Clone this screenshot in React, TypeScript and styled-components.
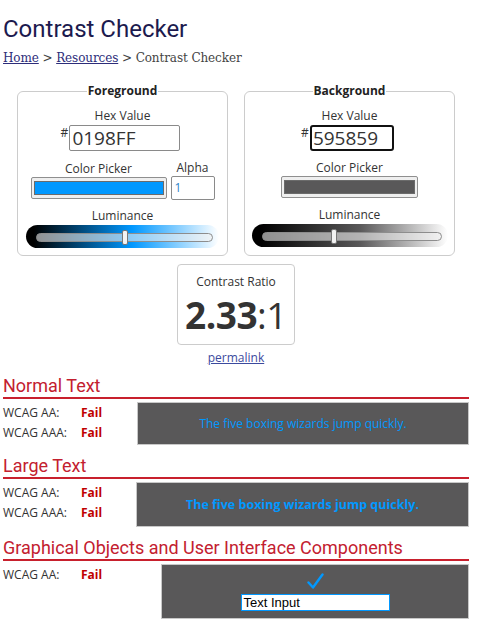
import React from "react";
import styled, { createGlobalStyle } from "styled-components";

const GlobalStyle = createGlobalStyle`
  body {
    margin: 0;
    background: #fff;
    font-family: "Open Sans", "Liberation Sans", sans-serif;
    color: #333;
  }
`;

const Page = styled.div`
  width: 466px;
  padding: 0 0 0 3px;
`;

const Title = styled.h1`
  margin: 15px 0 0;
  font-family: Roboto, "Liberation Sans", sans-serif;
  font-weight: 400;
  font-size: 24px;
  line-height: 28px;
  color: #1c1a4e;
`;

const Crumbs = styled.div`
  margin-top: 7px;
  font-family: "DejaVu Serif", "Liberation Serif", serif;
  font-size: 12px;
  line-height: 16px;
  color: #444;
  letter-spacing: -0.1px;
  a {
    color: #2d2d7a;
    text-decoration: underline;
  }
`;

const Pickers = styled.div`
  display: flex;
  justify-content: center;
  gap: 16px;
  margin-top: 17px;
`;

const Fieldset = styled.fieldset`
  box-sizing: border-box;
  width: 211px;
  margin: 0;
  padding: 9px 0 7px;
  border: 1px solid #ccc;
  border-radius: 6px;
  display: flex;
  flex-direction: column;
  align-items: center;
`;

const Legend = styled.legend`
  margin: 0 auto;
  padding: 0 1px;
  font-weight: 700;
  font-size: 12px;
  line-height: 16px;
  color: #222;
`;

const Label = styled.div`
  font-size: 12px;
  line-height: 16px;
  color: #333;
  text-align: center;
`;

const HexRow = styled.div`
  display: flex;
  align-items: flex-start;
  margin-top: 1px;
  margin-left: -4px;
`;

const Hash = styled.span`
  font-size: 12px;
  line-height: 12px;
  margin-right: 1px;
  margin-top: 2px;
`;

const HexInput = styled.div<{ $w: number; $focus?: boolean }>`
  box-sizing: border-box;
  width: ${(p) => p.$w}px;
  height: 26px;
  border: ${(p) => (p.$focus ? "2px solid #111" : "1px solid #8a8a8a")};
  border-radius: ${(p) => (p.$focus ? "3px" : "2px")};
  padding-left: ${(p) => (p.$focus ? "1px" : "2px")};
  font-size: 19px;
  line-height: ${(p) => (p.$focus ? "22px" : "24px")};
  color: #333;
`;

const PickerRow = styled.div`
  display: flex;
  gap: 4px;
  margin-top: 9px;
  align-items: flex-end;
`;

const Col = styled.div`
  display: flex;
  flex-direction: column;
  align-items: center;
`;

const Swatch = styled.div<{ $w: number }>`
  box-sizing: border-box;
  width: ${(p) => p.$w}px;
  height: 22px;
  border: 1px solid #8f8f8f;
  border-radius: 2px;
  background: #efefef;
  padding: 3px 2px;
  margin-bottom: 1px;
`;

const SwatchFill = styled.div<{ $c: string }>`
  height: 100%;
  background: ${(p) => p.$c};
  border: 1px solid #6b6b6b;
  box-sizing: border-box;
`;

const AlphaInput = styled.div`
  box-sizing: border-box;
  width: 44px;
  height: 24px;
  border: 1px solid #8a8a8a;
  border-radius: 2px;
  padding-left: 3px;
  font-size: 12px;
  line-height: 22px;
  color: #2b82c8;
`;

const LumLabel = styled(Label)`
  margin-top: 8px;
`;

const Pill = styled.div<{ $c: string; $w: number }>`
  position: relative;
  width: ${(p) => p.$w}px;
  height: 23px;
  margin-top: 1px;
  border-radius: 12px;
  background: linear-gradient(to right, #000 4%, ${(p) => p.$c} 55%, #fff 100%);
`;

const Track = styled.div`
  position: absolute;
  left: 10px;
  right: 6px;
  top: 8px;
  height: 9px;
  box-sizing: border-box;
  border: 1px solid #8d8d8d;
  border-radius: 5px;
  background: rgba(240, 240, 240, 0.6);
`;

const Thumb = styled.div`
  position: absolute;
  top: -4px;
  width: 6px;
  height: 15px;
  box-sizing: border-box;
  margin-left: -3px;
  border: 1px solid #777;
  border-radius: 2px;
  background: #f3f3f3;
`;

const RatioBox = styled.div`
  box-sizing: border-box;
  width: 118px;
  height: 81px;
  margin: 8px auto 0;
  border: 1px solid #ccc;
  border-radius: 4px;
  padding-top: 9px;
  text-align: center;
`;

const RatioValue = styled.div`
  margin-top: 5px;
  font-size: 37px;
  line-height: 40px;
  color: #333;
  letter-spacing: -0.5px;
  b {
    font-weight: 700;
  }
`;

const Permalink = styled.a`
  display: block;
  width: max-content;
  margin: 5px auto 0;
  font-size: 12px;
  line-height: 16px;
  color: #3c4a9e;
  text-decoration: underline;
`;

const Section = styled.section<{ $gap: number }>`
  margin-top: ${(p) => p.$gap}px;
`;

const Heading = styled.h2`
  margin: 0;
  padding-bottom: 0;
  border-bottom: 2px solid #c8202d;
  font-family: Roboto, "Liberation Sans", sans-serif;
  font-weight: 400;
  font-size: 18px;
  line-height: 22px;
  color: #c3202f;
`;

const Body = styled.div`
  display: flex;
  margin-top: 3px;
`;

const Results = styled.div<{ $w: number }>`
  width: ${(p) => p.$w}px;
  flex-shrink: 0;
  padding-top: 1px;
`;

const ResultRow = styled.div`
  display: flex;
  font-size: 12px;
  line-height: 20px;
  color: #333;
`;

const Level = styled.span`
  width: 78px;
`;

const Fail = styled.span`
  font-weight: 700;
  color: #c00000;
`;

const Sample = styled.div<{ $h: number; $bold?: boolean }>`
  flex: 1;
  box-sizing: border-box;
  height: ${(p) => p.$h}px;
  background: #595859;
  border: 1px solid #c8c8c8;
  display: flex;
  align-items: center;
  justify-content: center;
  color: #0198ff;
  font-size: ${(p) => (p.$bold ? "12.5px" : "12px")};
  font-weight: ${(p) => (p.$bold ? 700 : 400)};
`;

const UiSample = styled(Sample)`
  flex-direction: column;
  justify-content: flex-start;
  padding-top: 8px;
`;

const Check = styled.svg`
  display: block;
  width: 17px;
  height: 16px;
`;

const TextInput = styled.div`
  box-sizing: border-box;
  width: 149px;
  height: 17px;
  margin-top: 5px;
  background: #fff;
  border: 1px solid #0198ff;
  padding-left: 2px;
  font-family: "Liberation Sans", Arial, sans-serif;
  font-size: 13px;
  line-height: 15px;
  color: #000;
  font-weight: 400;
`;

const Slider: React.FC<{ color: string; width: number; pos: number }> = ({
  color,
  width,
  pos,
}) => (
  <Pill $c={color} $w={width}>
    <Track>
      <Thumb style={{ left: `${pos}%` }} />
    </Track>
  </Pill>
);

const rows = (labels: string[]) =>
  labels.map((l) => (
    <ResultRow key={l}>
      <Level>{l}</Level>
      <Fail>Fail</Fail>
    </ResultRow>
  ));

export default function App() {
  return (
    <>
      <GlobalStyle />
      <Page>
        <Title>Contrast Checker</Title>
        <Crumbs>
          <a>Home</a> &gt; <a>Resources</a> &gt; Contrast Checker
        </Crumbs>

        <Pickers>
          <Fieldset>
            <Legend>Foreground</Legend>
            <Label>Hex Value</Label>
            <HexRow>
              <Hash>#</Hash>
              <HexInput $w={111}>0198FF</HexInput>
            </HexRow>
            <PickerRow>
              <Col>
                <Label>Color Picker</Label>
                <Swatch $w={136}>
                  <SwatchFill $c="#0198ff" />
                </Swatch>
              </Col>
              <Col>
                <Label>Alpha</Label>
                <AlphaInput>1</AlphaInput>
              </Col>
            </PickerRow>
            <LumLabel>Luminance</LumLabel>
            <Slider color="#0198ff" width={193} pos={50} />
          </Fieldset>

          <Fieldset>
            <Legend>Background</Legend>
            <Label>Hex Value</Label>
            <HexRow>
              <Hash>#</Hash>
              <HexInput $w={84} $focus>
                595859
              </HexInput>
            </HexRow>
            <PickerRow>
              <Col>
                <Label>Color Picker</Label>
                <Swatch $w={137}>
                  <SwatchFill $c="#595859" />
                </Swatch>
              </Col>
            </PickerRow>
            <LumLabel>Luminance</LumLabel>
            <Slider color="#595859" width={196} pos={40} />
          </Fieldset>
        </Pickers>

        <RatioBox>
          <Label>Contrast Ratio</Label>
          <RatioValue>
            <b>2.33</b>:1
          </RatioValue>
        </RatioBox>
        <Permalink>permalink</Permalink>

        <Section $gap={9}>
          <Heading>Normal Text</Heading>
          <Body>
            <Results $w={134}>{rows(["WCAG AA:", "WCAG AAA:"])}</Results>
            <Sample $h={43}>The five boxing wizards jump quickly.</Sample>
          </Body>
        </Section>

        <Section $gap={10}>
          <Heading>Large Text</Heading>
          <Body>
            <Results $w={133}>{rows(["WCAG AA:", "WCAG AAA:"])}</Results>
            <Sample $h={45} $bold>
              The five boxing wizards jump quickly.
            </Sample>
          </Body>
        </Section>

        <Section $gap={10}>
          <Heading>Graphical Objects and User Interface Components</Heading>
          <Body>
            <Results $w={158}>{rows(["WCAG AA:"])}</Results>
            <UiSample $h={55}>
              <Check viewBox="0 0 17 16">
                <path
                  d="M1.5 9.5 L6 14.5 L15.5 1.5"
                  fill="none"
                  stroke="#0198ff"
                  strokeWidth="2.4"
                  strokeLinecap="round"
                  strokeLinejoin="round"
                />
              </Check>
              <TextInput>Text Input</TextInput>
            </UiSample>
          </Body>
        </Section>
      </Page>
    </>
  );
}
